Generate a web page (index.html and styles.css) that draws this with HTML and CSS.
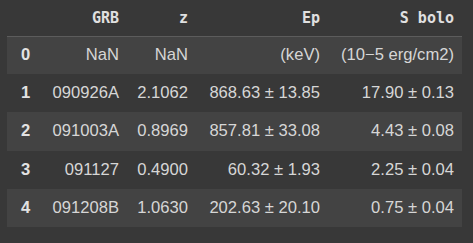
FILE: index.html
```html
<!DOCTYPE html>
<html>
<head>
<meta charset="utf-8">
<link rel="stylesheet" href="styles.css">
</head>
<body>
<table class="df">
  <colgroup>
    <col class="c-idx"><col class="c-grb"><col class="c-z"><col class="c-ep"><col class="c-s">
  </colgroup>
  <thead>
    <tr>
      <th class="idx"></th>
      <th class="col">GRB</th>
      <th class="col">z</th>
      <th class="col">Ep</th>
      <th class="col">S bolo</th>
    </tr>
  </thead>
  <tbody>
    <tr class="odd"><th class="idx">0</th><td>NaN</td><td>NaN</td><td>(keV)</td><td>(10−5 erg/cm2)</td></tr>
    <tr><th class="idx">1</th><td>090926A</td><td>2.1062</td><td>868.63 ± 13.85</td><td>17.90 ± 0.13</td></tr>
    <tr class="odd"><th class="idx">2</th><td>091003A</td><td>0.8969</td><td>857.81 ± 33.08</td><td>4.43 ± 0.08</td></tr>
    <tr><th class="idx">3</th><td>091127</td><td>0.4900</td><td>60.32 ± 1.93</td><td>2.25 ± 0.04</td></tr>
    <tr class="odd"><th class="idx">4</th><td>091208B</td><td>1.0630</td><td>202.63 ± 20.10</td><td>0.75 ± 0.04</td></tr>
  </tbody>
</table>
</body>
</html>
```

FILE: styles.css
```css
html, body {
  margin: 0;
  padding: 0;
  background: #383838;
}
body {
  padding: 0 0 0 7px;
}
.df {
  border-collapse: collapse;
  table-layout: fixed;
  width: 455px;
  font-family: "Liberation Sans", Arial, sans-serif;
  font-size: 16.6px;
  color: #d6d6d6;
}
.c-idx { width: 30px; }
.c-grb { width: 90px; }
.c-z { width: 69px; }
.c-ep { width: 132px; }
.c-s { width: 134px; }

.df thead tr {
  height: 36px;
  border-bottom: 1px solid #5c5c5c;
}
.df th.col {
  font-family: "DejaVu Sans Mono", monospace;
  font-weight: bold;
  font-size: 15px;
  color: #e0e0e0;
  text-align: right;
  padding: 0 8px 0 0;
  white-space: nowrap;
}
.df tbody tr {
  height: 38.2px;
}
.df tbody tr.odd {
  background: #434343;
}
.df th.idx {
  text-align: left;
  padding: 0 0 0 14px;
  font-weight: bold;
  color: #e2e2e2;
}
.df td {
  text-align: right;
  padding: 0 8px 0 0;
  white-space: nowrap;
}
```
